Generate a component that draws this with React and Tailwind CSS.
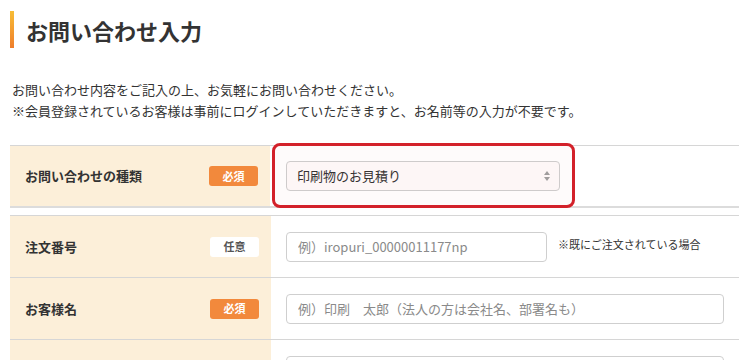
import React from 'react';

const font = { fontFamily: '"Noto Sans CJK JP", "Noto Sans", sans-serif' };

const Badge = ({ required }) =>
    required ? (
        <span className="w-[49px] h-[20px] rounded-[3px] bg-[#f2893c] text-white text-[11px] font-bold flex items-center justify-center">必須</span>
    ) : (
        <span className="w-[49px] h-[20px] rounded-[3px] bg-white text-[#555] text-[11px] font-bold flex items-center justify-center">任意</span>
    );

const Row = ({ label, required, children, last }) => (
    <div className={`flex h-[62px] ${last ? '' : 'border-b border-[#d6d6d6]'}`}>
        <div className="w-[261px] bg-[#fcefd9] flex items-center justify-between pl-[15px] pr-[12px]">
            <span className="text-[13px] font-bold text-[#333]">{label}</span>
            <Badge required={required} />
        </div>
        <div className="flex-1 flex items-center pl-[15px]">{children}</div>
    </div>
);

const Input = ({ placeholder, width }) => (
    <input
        type="text"
        placeholder={placeholder}
        className={`${width} h-[30px] rounded-[4px] border border-[#cfcfcf] bg-white px-[11px] text-[13px] text-[#333] placeholder-[#8a8a8a] outline-none`}
        style={font}
    />
);

export default function App() {
    return (
        <div className="min-h-screen bg-white text-[#333] relative overflow-hidden" style={font}>
            <div className="ml-[10px] w-[729px] pt-[11px]">
                {/* Title */}
                <div className="h-[37px] border-l-4 border-[#f2a531] flex items-center pl-[12px] relative">
                    <div className="absolute left-[-4px] top-0 w-[4px] h-full bg-gradient-to-b from-[#f7bd36] to-[#ee7d2c]"></div>
                    <h1 className="text-[22px] font-bold text-[#333] leading-none">お問い合わせ入力</h1>
                </div>

                {/* Lead */}
                <div className="mt-[31px] ml-[2px] text-[13px] leading-[21px] text-[#333]">
                    <p>お問い合わせ内容をご記入の上、お気軽にお問い合わせください。</p>
                    <p>※会員登録されているお客様は事前にログインしていただきますと、お名前等の入力が不要です。</p>
                </div>

                {/* Type table */}
                <div className="mt-[24px] border-t border-[#d6d6d6] border-b-2 border-b-[#dcdcdc]">
                    <div className="flex h-[60px]">
                        <div className="w-[260px] bg-[#fcefd9] flex items-center justify-between pl-[15px] pr-[12px]">
                            <span className="text-[13px] font-bold text-[#333]">お問い合わせの種類</span>
                            <Badge required />
                        </div>
                        <div className="flex-1 flex items-center pl-[16px]">
                            <div className="w-[274px] h-[30px] rounded-[4px] border border-[#cfcfcf] bg-[#fefafa] flex items-center justify-between pl-[10px] pr-[8px]">
                                <span className="text-[13px] text-[#333]">印刷物のお見積り</span>
                                <svg width="8" height="12" viewBox="0 0 8 12">
                                    <path d="M4 1 L7 5 L1 5 Z" fill="#a0a0a0" />
                                    <path d="M4 11 L7 7 L1 7 Z" fill="#a0a0a0" />
                                </svg>
                            </div>
                        </div>
                    </div>
                </div>

                {/* Main table */}
                <div className="mt-[7px] border-t border-[#d6d6d6]">
                    <Row label="注文番号">
                        <Input placeholder="例）iropuri_00000011177np" width="w-[261px]" />
                        <span className="ml-[11px] text-[11px] text-[#333] -mt-[4px]">※既にご注文されている場合</span>
                    </Row>
                    <Row label="お客様名" required>
                        <Input placeholder="例）印刷　太郎（法人の方は会社名、部署名も）" width="w-[438px]" />
                    </Row>
                    <Row label="" required last>
                        <Input placeholder="" width="w-[438px]" />
                    </Row>
                </div>
            </div>

            {/* Highlight annotation */}
            <div className="absolute left-[272px] top-[143px] w-[303px] h-[65px] rounded-[8px] border-[3px] border-[#d3212a] bg-[#d3212a]/[0.02] pointer-events-none"></div>
        </div>
    );
}
